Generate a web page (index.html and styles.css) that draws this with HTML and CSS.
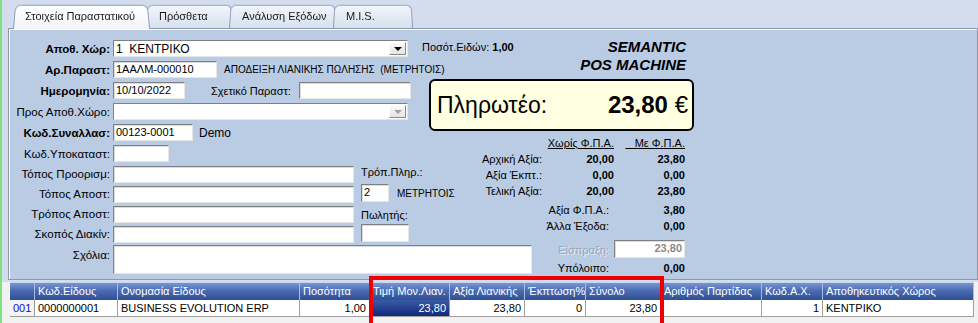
FILE: index.html
```html
<!DOCTYPE html>
<html lang="el">
<head>
  <meta charset="UTF-8">
  <title>Στοιχεία Παραστατικού</title>
  <link rel="stylesheet" href="styles.css">
</head>
<body>
  <div class="app">
    <div class="tabs">
      <div class="tab active w1">Στοιχεία Παραστατικού</div>
      <div class="tab w2">Πρόσθετα</div>
      <div class="tab w3">Ανάλυση Εξόδων</div>
      <div class="tab w4">M.I.S.</div>
    </div>

    <div class="panel">
      <div class="form">
        <div class="row">
          <span class="lbl b">Αποθ. Χώρ:</span>
          <div class="combo"><span class="txt">1&nbsp; ΚΕΝΤΡΙΚΟ</span><span class="drop"><i></i></span></div>
        </div>
        <div class="row">
          <span class="lbl b">Αρ.Παραστ:</span>
          <div class="inp w104">1ΑΑΛΜ-000010</div>
          <span class="note">ΑΠΟΔΕΙΞΗ ΛΙΑΝΙΚΗΣ ΠΩΛΗΣΗΣ&nbsp; (ΜΕΤΡΗΤΟΙΣ)</span>
        </div>
        <div class="row">
          <span class="lbl b">Ημερομηνία:</span>
          <div class="inp w72">10/10/2022</div>
          <span class="rel">Σχετικό Παραστ:</span>
          <div class="inp w112"></div>
        </div>
        <div class="row">
          <span class="lbl">Προς Αποθ.Χώρο:</span>
          <div class="combo off"><span class="txt"></span><span class="drop"><i></i></span></div>
        </div>
        <div class="row">
          <span class="lbl b">Κωδ.Συναλλασ:</span>
          <div class="inp w80">00123-0001</div>
          <span class="demo">Demo</span>
        </div>
        <div class="row">
          <span class="lbl">Κωδ.Υποκαταστ:</span>
          <div class="inp w56"></div>
        </div>

        <div class="lower">
          <div class="col">
            <div class="row s"><span class="lbl">Τόπος Προορισμ:</span><div class="inp w241"></div></div>
            <div class="row s"><span class="lbl">Τόπος Αποστ:</span><div class="inp w241"></div></div>
            <div class="row s"><span class="lbl">Τρόπος Αποστ:</span><div class="inp w241"></div></div>
            <div class="row s"><span class="lbl">Σκοπός Διακίν:</span><div class="inp w241"></div></div>
          </div>
          <div class="side">
            <div class="side-lbl">Τρόπ.Πληρ.:</div>
            <div class="side-pay"><div class="inp w28">2</div><span>ΜΕΤΡΗΤΟΙΣ</span></div>
            <div class="side-lbl seller">Πωλητής:</div>
            <div class="inp w48 tall"></div>
          </div>
        </div>

        <div class="row memo">
          <span class="lbl">Σχόλια:</span>
          <div class="inp area"></div>
        </div>
      </div>

      <div class="summary">
        <div class="head">
          <div class="count">Ποσότ.Ειδών: <b>1,00</b></div>
          <div class="brand">SEMANTIC<br>POS MACHINE</div>
        </div>
        <div class="pay-box">
          <span class="pay-t">Πληρωτέο:</span>
          <span class="pay-v">23,80 <span class="eur">€</span></span>
        </div>
        <div class="totals">
          <span></span><span class="th">Χωρίς Φ.Π.Α.</span><span class="th">&nbsp;&nbsp;&nbsp;Με Φ.Π.Α.</span>
          <span>Αρχική Αξία:</span><b>20,00</b><b>23,80</b>
          <span>Αξία Έκπτ.:</span><b>0,00</b><b>0,00</b>
          <span>Τελική Αξία:</span><b>20,00</b><b>23,80</b>
          <span class="wide">Αξία Φ.Π.Α.:</span><b>3,80</b>
          <span class="wide">Άλλα Έξοδα:</span><b>0,00</b>
          <span class="wide dim">Είσπραξη:</span><div class="inp cash">23,80</div>
          <span class="wide">Υπόλοιπο:</span><b>0,00</b>
        </div>
      </div>
    </div>

    <div class="grid-wrap">
      <div class="grid">
        <div class="h"></div>
        <div class="h">Κωδ.Είδους</div>
        <div class="h">Ονομασία Είδους</div>
        <div class="h">Ποσότητα</div>
        <div class="h">Τιμή Μον.Λιαν.</div>
        <div class="h">Αξία Λιανικής</div>
        <div class="h">Έκπτωση%</div>
        <div class="h">Σύνολο</div>
        <div class="h">Αριθμός Παρτίδας</div>
        <div class="h">Κωδ.Α.Χ.</div>
        <div class="h">Αποθηκευτικός Χώρος</div>

        <div class="d idx">001</div>
        <div class="d">0000000001</div>
        <div class="d">BUSINESS EVOLUTION ERP</div>
        <div class="d num">1,00</div>
        <div class="d num sel">23,80</div>
        <div class="d num">23,80</div>
        <div class="d num">0</div>
        <div class="d num">23,80</div>
        <div class="d"></div>
        <div class="d num">1</div>
        <div class="d">ΚΕΝΤΡΙΚΟ</div>
      </div>
    </div>

    <div class="mark"></div>
  </div>
</body>
</html>
```

FILE: styles.css
```css
* { box-sizing: border-box; }
body { margin: 0; font-family: "Liberation Sans", Arial, sans-serif; font-size: 11px; color: #000; background: #d3dded; }
.app { position: relative; width: 978px; height: 323px; border-left: 2px solid #7fe27f; overflow: hidden; }

/* tabs */
.tabs { display: flex; height: 28px; padding-left: 11px; }
.tab { position: relative; z-index: 0; height: 24px; margin-top: 4px; padding: 1px 0 0 13px; line-height: 23px; white-space: nowrap; color: #1a1a1a; }
.tab::before { content: ""; position: absolute; inset: 0; z-index: -1; border: 1px solid #8e9fbd; border-bottom: none; border-radius: 6px 6px 0 0; background: linear-gradient(#f3f6fb, #d6e0ee); transform: perspective(40px) rotateX(3deg); transform-origin: bottom; }
.tab + .tab { margin-left: -4px; }
.tab.active { z-index: 2; padding-left: 12px; height: 25px; }
.tab.active::before { background: linear-gradient(#ffffff, #f2f5fa); }
.w1 { width: 137px; }
.w2 { width: 87px; }
.w3 { width: 108px; }
.w4 { width: 80px; }

/* main panel */
.panel { display: flex; height: 252px; margin-left: 6px; padding: 9px 0 0 2px; background: #b9cce4; border: 1px solid #8c98ad; box-shadow: inset 1px 1px 0 #fff; }
.form { width: 411px; flex-shrink: 0; }
.row { display: flex; align-items: center; height: 21px; white-space: nowrap; }
.row.s { height: 20px; }
.lbl { width: 99px; flex-shrink: 0; margin-right: 3px; text-align: right; font-size: 11.5px; }
.lbl.b { font-weight: bold; }

.inp { height: 17px; flex-shrink: 0; padding: 0 2px; line-height: 15px; background: #fff; border: 1px solid; border-color: #808080 #e6e6e6 #e6e6e6 #808080; box-shadow: inset 1px 1px 0 #dcdcdc; white-space: nowrap; }
.w28 { width: 28px; }
.w48 { width: 48px; }
.w56 { width: 56px; }
.w72 { width: 72px; }
.w80 { width: 80px; }
.w104 { width: 104px; }
.w112 { width: 112px; }
.w241 { width: 241px; }

.combo { display: flex; align-items: center; justify-content: space-between; width: 295px; height: 17px; padding: 0 1px 0 2px; background: #fff; border: 1px solid; border-color: #808080 #e6e6e6 #e6e6e6 #808080; }
.combo .txt { font-size: 12px; }
.drop { display: flex; align-items: center; justify-content: center; width: 17px; height: 13px; background: linear-gradient(#fafafa, #e4e4e4); border: 1px solid; border-color: #fff #8a8a8a #8a8a8a #fff; }
.drop i { border: 4px solid transparent; border-top: 4px solid #000; border-bottom: none; margin-top: 1px; }
.combo.off .drop i { border-top-color: #a0a0a0; }

.note { margin-left: 7px; font-size: 10px; }
.rel { margin-left: 26px; margin-right: 8px; }
.demo { margin-left: 6px; font-size: 12px; }

.lower { display: flex; }
.col { width: 343px; }
.side { margin-left: 7px; width: 48px; white-space: nowrap; }
.side-lbl { margin-top: 2px; line-height: 13px; }
.side-pay { display: flex; align-items: center; margin-top: 5px; }
.side-pay .inp { height: 18px; }
.side-pay span { margin-left: 8px; font-size: 10px; }
.seller { margin-top: 7px; }
.tall { height: 18px; margin-top: 2px; }

.row.memo { align-items: flex-start; height: 30px; margin-top: 1px; }
.memo .lbl { margin-top: 4px; }
.area { width: 419px; height: 29px; }

/* right summary */
.summary { width: 272px; flex-shrink: 0; }
.head { display: flex; justify-content: space-between; align-items: flex-start; padding-right: 8px; }
.count { margin-top: 3px; }
.brand { font-size: 15px; line-height: 18px; font-weight: bold; font-style: italic; text-align: right; }
.pay-box { display: flex; align-items: center; justify-content: space-between; width: 265px; height: 52px; margin: 5px 0 0 7px; padding: 0 4px 0 6px; background: #ffffe1; border: 2px solid #000; border-radius: 6px; }
.pay-t { font-size: 23px; }
.pay-v { font-size: 24px; font-weight: bold; }
.eur { font-weight: normal; }

.totals { display: grid; grid-template-columns: 120px 72px 71px; grid-template-rows: 14px 16px 16px 16px 19px 16px 24px 18px; align-items: end; margin-top: 6px; line-height: 16px; text-align: right; white-space: nowrap; }
.th { text-decoration: underline; }
.wide { grid-column: 1 / 3; padding-right: 5px; }
.dim { color: #99a6bb; text-shadow: 1px 1px 0 #e4ecf6; }
.cash { height: 18px; text-align: right; font-weight: bold; color: #8a8a8a; }

/* grid */
.grid-wrap { height: 41px; margin-top: 2px; padding-left: 8px; background: #f2f2f2; }
.grid { display: grid; grid-template-columns: 25px 83px 182px 70px 80px 75px 61px 75px 101px 61px 151px; grid-template-rows: 18px 17px; }
.h { padding-left: 3px; line-height: 17px; color: #fff; white-space: nowrap; overflow: hidden; background: linear-gradient(#7896d4 0%, #4b6cb3 45%, #2f4e94 100%); border-right: 1px solid #a9bbdf; border-top: 1px solid #c9d5ee; }
.d { padding: 0 3px; line-height: 16px; white-space: nowrap; overflow: hidden; background: #fff; border-right: 1px solid #a0a0a0; border-bottom: 1px solid #a0a0a0; }
.num { text-align: right; }
.idx { color: #1010c8; background: #f4f4f4; border-color: #9a9a9a; }
.sel { color: #fff; background: linear-gradient(#3b5ba6, #10287a); }

/* highlight annotation drawn over the grid */
.mark { position: absolute; left: 367px; top: 276px; width: 295px; height: 60px; border: 4px solid #ee0000; }
```
